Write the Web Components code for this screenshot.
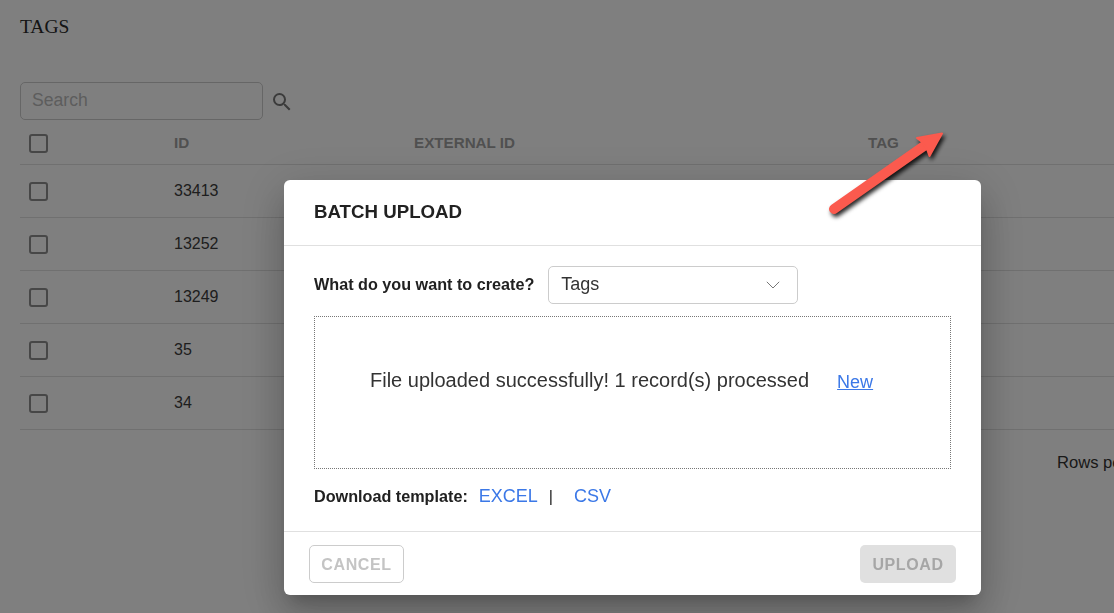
<!DOCTYPE html>
<html>
<head>
<meta charset="utf-8">
<title>Tags</title>
<style>
  html, body { margin: 0; height: 100%; overflow: hidden; background: #fff; }
  body { font-family: "Liberation Sans", Arial, sans-serif; }
</style>
</head>
<body>
<tags-page></tags-page>
<batch-upload-dialog></batch-upload-dialog>
<callout-arrow></callout-arrow>

<script>
class AppCheckbox extends HTMLElement {
  constructor() {
    super();
    this.attachShadow({mode: 'open'}).innerHTML = `
      <style>
        :host { display: block; width: 19px; height: 19px; box-sizing: border-box;
                border: 2px solid #8e8e8e; border-radius: 3px; }
      </style>
    `;
  }
}
customElements.define('app-checkbox', AppCheckbox);

class TagsRow extends HTMLElement {
  constructor() {
    super();
    this.attachShadow({mode: 'open'}).innerHTML = `
      <style>
        :host { display: grid; grid-template-columns: 154px 240px 454px 1fr; height: 53px;
                box-sizing: border-box; border-bottom: 1px solid #e0e0e0; align-items: center;
                font-size: 16px; color: #3c3c3c; }
        :host([head]) { height: 45px; font-size: 15.2px; font-weight: bold; color: #a0a0a0; }
        .check { padding-left: 9px; }
        :host([head]) .check { padding-top: 2px; }
        :host([head]) .cell { padding-bottom: 0; }
        .cell { padding-bottom: 1px; white-space: nowrap; }
      </style>
      <div class="check"><app-checkbox></app-checkbox></div>
      <div class="cell"><slot name="id"></slot></div>
      <div class="cell"><slot name="external"></slot></div>
      <div class="cell"><slot name="tag"></slot></div>
    `;
  }
}
customElements.define('tags-row', TagsRow);

class TagsPage extends HTMLElement {
  constructor() {
    super();
    const ids = ['33413', '13252', '13249', '35', '34'];
    this.attachShadow({mode: 'open'}).innerHTML = `
      <style>
        :host { display: block; padding: 16px 0 0 20px; width: 1200px; box-sizing: border-box; }
        h1 { margin: 0; font: normal 19.5px/22px "Liberation Serif", "Times New Roman", serif; color: #2a2a2a; }
        .search { display: flex; align-items: center; gap: 7px; margin-top: 44px; height: 38px; }
        .search input { width: 243px; height: 38px; box-sizing: border-box; padding: 0 11px 2px;
                        border: 1px solid #ccc; border-radius: 5px; background: transparent;
                        font: 17.6px "Liberation Sans", Arial, sans-serif; outline: none; }
        .search input::placeholder { color: #bbb; opacity: 1; }
        .search svg { display: block; margin-top: 2px; }
        .foot { padding: 23px 0 0 1037px; font-size: 16.6px; color: #333; white-space: nowrap; }
      </style>
      <h1>TAGS</h1>
      <div class="search">
        <input placeholder="Search">
        <svg width="24" height="24" viewBox="0 0 24 24" fill="#777">
          <path d="M15.5 14h-.79l-.28-.27A6.47 6.47 0 0 0 16 9.5 6.5 6.5 0 1 0 9.5 16c1.61 0 3.09-.59 4.23-1.57l.27.28v.79l5 4.99L20.49 19l-4.99-5zm-6 0C7.01 14 5 11.99 5 9.5S7.01 5 9.5 5 14 7.01 14 9.5 11.99 14 9.5 14z"/>
        </svg>
      </div>
      <div class="rows">
        <tags-row head>
          <span slot="id">ID</span>
          <span slot="external">EXTERNAL ID</span>
          <span slot="tag">TAG</span>
        </tags-row>
        ${ids.map(id => `<tags-row><span slot="id">${id}</span></tags-row>`).join('')}
      </div>
      <div class="foot">Rows per page</div>
    `;
  }
}
customElements.define('tags-page', TagsPage);

class BatchUploadDialog extends HTMLElement {
  constructor() {
    super();
    this.attachShadow({mode: 'open'}).innerHTML = `
      <style>
        :host { position: fixed; inset: 0; display: block; background: rgba(0,0,0,.5);
                padding: 180px 0 0 284px; box-sizing: border-box; color: #212121; }
        .modal { width: 697px; height: 415px; background: #fff; border-radius: 6px;
                 display: flex; flex-direction: column;
                 box-shadow: 0 11px 15px -7px rgba(0,0,0,.2), 0 24px 38px 3px rgba(0,0,0,.14), 0 9px 46px 8px rgba(0,0,0,.12); }
        header { height: 66px; box-sizing: border-box; padding: 0 30px 2px; display: flex; align-items: center;
                 border-bottom: 1px solid #e0e0e0; font-size: 18.7px; font-weight: bold; }
        main { flex: 1; padding: 20px 30px 0; display: flex; flex-direction: column; }
        .pick { display: flex; align-items: center; gap: 14px; font-size: 16.2px; font-weight: bold; }
        .pick > span { padding-bottom: 2px; }
        .select { width: 250px; height: 38px; box-sizing: border-box; border: 1px solid #ccc; border-radius: 5px;
                  display: flex; align-items: center; justify-content: space-between; padding: 0 17px 0 12px;
                  font-size: 18px; font-weight: normal; color: #333; }
        .select span { padding-bottom: 2px; }
        .drop { margin-top: 12px; height: 153px; box-sizing: border-box; border: 1px dotted #777;
                padding: 52px 0 0 55px; display: flex; gap: 28px; font-size: 20px; color: #333; }
        .drop a { color: #3b78e7; text-decoration: underline; font-size: 18px; padding-top: 3px; }
        .tpl { margin-top: 17px; display: flex; align-items: baseline; font-size: 16.2px; font-weight: bold; }
        .tpl a { color: #3b78e7; font-weight: normal; font-size: 18px; text-decoration: none; }
        .tpl .excel { margin-left: 11px; }
        .tpl .sep { font-weight: normal; margin: 0 21px 0 11px; }
        footer { height: 64px; box-sizing: border-box; border-top: 1px solid #e0e0e0; padding: 13px 25px 0;
                 display: flex; justify-content: space-between; align-items: flex-start; }
        button { height: 38px; box-sizing: border-box; border-radius: 5px; font: bold 16px "Liberation Sans", Arial, sans-serif;
                 letter-spacing: .6px; padding: 2px 0 0; }
        .cancel { width: 95px; background: #fff; border: 1px solid #ccc; color: #c4c4c4; }
        .upload { width: 96px; background: #e0e0e0; border: 0; color: #a6a6a6; }
      </style>
      <div class="modal">
        <header>BATCH UPLOAD</header>
        <main>
          <div class="pick">
            <span>What do you want to create?</span>
            <div class="select">
              <span>Tags</span>
              <svg width="14" height="8" viewBox="0 0 14 8" fill="none" stroke="#777" stroke-width="1"><path d="M.8.8 7 7 13.2.8"/></svg>
            </div>
          </div>
          <div class="drop">
            <span>File uploaded successfully! 1 record(s) processed</span>
            <a>New</a>
          </div>
          <div class="tpl">
            <span>Download template:</span>
            <a class="excel">EXCEL</a>
            <span class="sep">|</span>
            <a>CSV</a>
          </div>
        </main>
        <footer>
          <button class="cancel">CANCEL</button>
          <button class="upload">UPLOAD</button>
        </footer>
      </div>
    `;
  }
}
customElements.define('batch-upload-dialog', BatchUploadDialog);

// annotation drawn on top of the screenshot
class CalloutArrow extends HTMLElement {
  constructor() {
    super();
    this.attachShadow({mode: 'open'}).innerHTML = `
      <style>
        :host { position: fixed; left: 820px; top: 124px; width: 135px; height: 100px; display: block; }
        svg { display: block; overflow: visible; filter: drop-shadow(2px 3px 2px rgba(0,0,0,.85)); }
      </style>
      <svg width="135" height="100" viewBox="820 124 135 100">
        <path d="M834 209 924 146" stroke="#fb5a4e" stroke-width="10" stroke-linecap="round" fill="none"/>
        <path d="M942 133.500 917 138 Q926 144 929.500 156Z" fill="#fb5a4e" stroke="#fb5a4e" stroke-width="2" stroke-linejoin="round"/>
      </svg>
    `;
  }
}
customElements.define('callout-arrow', CalloutArrow);
</script>
</body>
</html>
